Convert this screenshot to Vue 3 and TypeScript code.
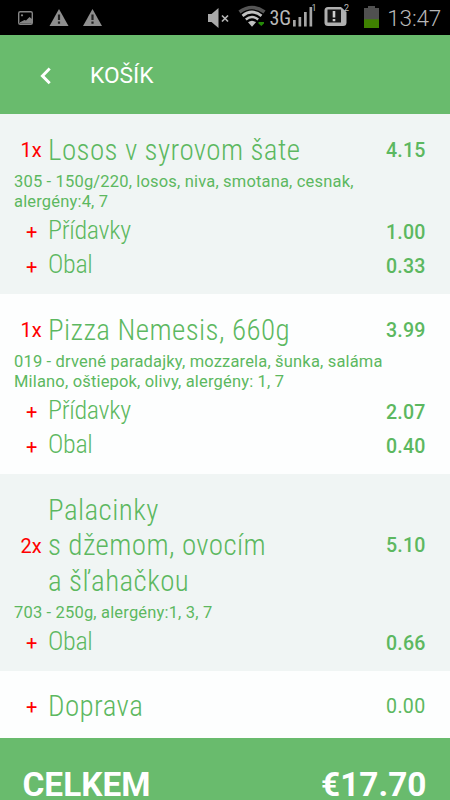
<script setup lang="ts">
interface Extra {
  name: string
  price: string
}

interface CartItem {
  count: number
  lines: string[]
  price: string
  description: string[]
  extras: Extra[]
}

const items: CartItem[] = [
  {
    count: 1,
    lines: ['Losos v syrovom šate'],
    price: '4.15',
    description: ['305 - 150g/220, losos, niva, smotana, cesnak,', 'alergény:4, 7'],
    extras: [
      { name: 'Přídavky', price: '1.00' },
      { name: 'Obal', price: '0.33' },
    ],
  },
  {
    count: 1,
    lines: ['Pizza Nemesis, 660g'],
    price: '3.99',
    description: ['019 - drvené paradajky, mozzarela, šunka, saláma', 'Milano, oštiepok, olivy, alergény: 1, 7'],
    extras: [
      { name: 'Přídavky', price: '2.07' },
      { name: 'Obal', price: '0.40' },
    ],
  },
  {
    count: 2,
    lines: ['Palacinky', 's džemom, ovocím', 'a šľahačkou'],
    price: '5.10',
    description: ['703 - 250g, alergény:1, 3, 7'],
    extras: [{ name: 'Obal', price: '0.66' }],
  },
]
</script>

<template>
  <div class="screen">
    <div class="status">
      <svg class="status-icons" width="450" height="35" viewBox="0 0 450 35">
        <rect x="18.7" y="11.7" width="13.6" height="12.6" rx="1.5" fill="none" stroke="#858585" stroke-width="1.4" />
        <circle cx="22" cy="15.3" r="1.1" fill="#858585" />
        <path d="M20 23.500v-1.200l4.500-2.300 1.500.5 3.500-3.500 2.500 2v4.500z" fill="#858585" />
        <g fill="#8f8f8f">
          <path d="M59 9l9.500 17h-19z" />
          <path d="M92.500 9l9.500 17h-19z" />
        </g>
        <g fill="#222">
          <path d="M57.900 14.500h2.200v5.500h-2.200zM57.900 21.500h2.200v2.200h-2.200zM91.400 14.500h2.200v5.500h-2.200zM91.400 21.500h2.200v2.200h-2.200z" />
        </g>
        <path d="M208 14h3.500l7-6v20l-7-6H208z" fill="#a9a9a9" />
        <path d="M222 15.500l6 6M228 15.500l-6 6" stroke="#b5b5b5" stroke-width="1.700" />
        <g fill="none">
          <path d="M239.500 12q12.500-9 25 0" stroke="#555" stroke-width="3.600" />
          <path d="M242.500 15.800q9.500-7.500 19 0" stroke="#c0c0c0" stroke-width="2.800" />
          <path d="M245.800 19.500q6.200-5 12.400 0" stroke="#c0c0c0" stroke-width="2.500" />
        </g>
        <path d="M248 22.200q4-3 8 0l-4 4.500z" fill="#c0c0c0" />
        <path d="M258.500 22h5.500v1.500l-2.700 2.500-2.800-2.500z" fill="#258a08" />
        <g fill="#a5a5a5">
          <rect x="293" y="20" width="2.700" height="6.500" />
          <rect x="298.500" y="17" width="2.700" height="9.500" />
          <rect x="304" y="12" width="2.700" height="14.500" />
          <rect x="309.500" y="7" width="2.700" height="19.500" />
        </g>
        <path d="M328 7h13l5.500 5v10.500q0 3.500-3.500 3.500h-15q-3.500 0-3.500-3.500v-12q0-3.500 3.500-3.500z" fill="#b0b0b0" />
        <rect x="327.500" y="9.500" width="13.500" height="13" fill="#151515" />
        <path d="M332.700 11h2.600v6.500h-2.600zM332.700 19h2.600v2.200h-2.600z" fill="#d0d0d0" />
        <path d="M364 8h4V6h7v2h4v12h-15z" fill="#505050" />
        <rect x="364" y="19.300" width="15" height="8.700" fill="#3f8200" />
      </svg>
      <span class="network">3G</span>
      <span class="sup sim-one">1</span>
      <span class="sup sim-two">2</span>
      <span class="clock">13:47</span>
    </div>

    <header class="header">
      <svg class="back" width="12" height="18" viewBox="0 0 12 18">
        <path d="M9.700 1.500L2.400 8.900l7.300 7.300" fill="none" stroke="#fff" stroke-width="2.900" />
      </svg>
      <h1>KOŠÍK</h1>
    </header>

    <section v-for="item in items" :key="item.lines[0]" class="item">
      <div class="row main">
        <span class="mark">{{ item.count }}x</span>
        <div class="name">
          <div v-for="line in item.lines" :key="line">{{ line }}</div>
        </div>
        <span class="price">{{ item.price }}</span>
      </div>
      <div class="description">
        <div v-for="line in item.description" :key="line">{{ line }}</div>
      </div>
      <div v-for="extra in item.extras" :key="extra.name" class="row extra">
        <span class="mark plus">+</span>
        <div class="name">{{ extra.name }}</div>
        <span class="price">{{ extra.price }}</span>
      </div>
    </section>

    <section class="delivery row main">
      <span class="mark plus">+</span>
      <div class="name">Doprava</div>
      <span class="price">0.00</span>
    </section>

    <footer class="total">
      <span>CELKEM</span>
      <span class="sum">€17.70</span>
    </footer>
  </div>
</template>

<style>
body {
  margin: 0;
  overflow: hidden;
}
</style>

<style scoped>
.screen {
  display: flex;
  flex-direction: column;
  width: 450px;
  height: 800px;
  overflow: hidden;
  background: #fdfefe;
  color: #5cb860;
  font-family: Roboto, sans-serif;
}

.status {
  position: relative;
  flex: none;
  height: 35px;
  background: #000;
  color: #b8b8b8;
}

.status-icons {
  display: block;
}

.status span {
  position: absolute;
  white-space: nowrap;
}

.network {
  left: 269.500px;
  top: 7px;
  font-family: 'Roboto Condensed', Roboto, sans-serif;
  font-stretch: 80%;
  font-size: 20px;
  line-height: 23px;
}

.sup {
  top: 4px;
  font-size: 9px;
  line-height: 9px;
}

.sim-one {
  left: 311.500px;
}

.sim-two {
  left: 344px;
}

.clock {
  right: 9px;
  top: 5px;
  font-size: 22.500px;
  line-height: 27px;
  font-weight: 350;
  letter-spacing: -0.200px;
}

.header {
  display: flex;
  flex: none;
  align-items: center;
  box-sizing: border-box;
  height: 79px;
  padding-left: 40px;
  background: #69bb6d;
  color: #fff;
}

.back {
  margin-top: 3px;
}

h1 {
  margin: 1px 0 0 38px;
  font-size: 22.700px;
  font-weight: 400;
}

.item {
  flex: none;
  padding: 19px 0 12px;
}

.item:nth-of-type(odd) {
  background: #f0f5f4;
}

.row {
  display: flex;
  align-items: center;
}

.mark {
  flex: none;
  width: 34px;
  padding-left: 14px;
  color: #f00;
  font-size: 20px;
  line-height: 24px;
  text-align: center;
}

.plus {
  width: 32.500px;
  padding-left: 15.500px;
}

.name {
  flex: 1;
  font-family: 'Roboto Condensed', Roboto, sans-serif;
  font-stretch: 75%;
  font-weight: 300;
  white-space: nowrap;
}

.main .name {
  font-size: 29px;
  line-height: 35.500px;
  letter-spacing: 0.420px;
}

.item .main .mark {
  margin-top: -1px;
}

.extra .name {
  font-size: 26px;
  line-height: 34.500px;
  letter-spacing: -0.300px;
}

.extra .mark {
  padding-top: 4px;
}

.extra .price {
  padding-top: 5px;
}

.price {
  padding-right: 24.500px;
  font-size: 19.600px;
  line-height: 24px;
  font-weight: 500;
  letter-spacing: 0.150px;
}

.description {
  padding: 3.500px 14px 1.500px;
  font-size: 16.500px;
  line-height: 19.700px;
  letter-spacing: 0.170px;
  white-space: nowrap;
}

.delivery {
  flex: none;
  height: 67px;
}

.delivery .name {
  padding-top: 6px;
}

.delivery .mark {
  padding-top: 5px;
}

.delivery .price {
  padding-top: 5px;
  font-weight: 400;
  letter-spacing: 0.300px;
}

.total {
  display: flex;
  flex: none;
  justify-content: space-between;
  box-sizing: border-box;
  height: 62px;
  padding: 32px 23.500px 0 22.500px;
  background: #69bb6d;
  color: #fff;
  font-size: 33.400px;
  line-height: 30px;
  font-weight: 700;
}
</style>
